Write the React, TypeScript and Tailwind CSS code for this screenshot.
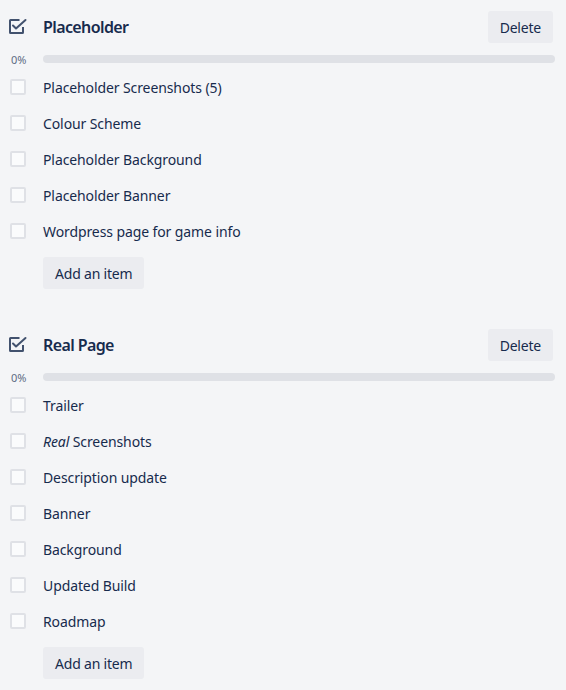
import React from "react";

type Item = { label: React.ReactNode };

interface ChecklistProps {
  title: string;
  items: Item[];
}

const ChecklistIcon = () => (
  <svg width="22" height="20" viewBox="0 0 22 20" fill="none" className="text-[#42526e]">
    <path
      d="M13.5 3H4.5C4.2 3 4 3.2 4 3.5V15.5C4 15.8 4.2 16 4.5 16H16.5C16.8 16 17 15.8 17 15.5V10"
      stroke="currentColor"
      strokeWidth="2"
    />
    <path
      d="M7 8.5L10 11.5L19.5 3"
      stroke="currentColor"
      strokeWidth="2"
      strokeLinecap="round"
      strokeLinejoin="round"
    />
  </svg>
);

const Checklist: React.FC<ChecklistProps> = ({ title, items }) => {
  return (
    <div>
      {/* Header */}
      <div className="flex items-center justify-between h-8">
        <div className="flex items-center">
          <div className="w-[43px] pl-[6px] flex items-center">
            <ChecklistIcon />
          </div>
          <h3 className="text-[16px] font-semibold tracking-[-0.6px] text-[#172b4d] leading-5">
            {title}
          </h3>
        </div>
        <button className="h-8 px-3 mr-[2px] rounded-[3px] bg-[#ebecf0] text-[14px] tracking-[-0.2px] text-[#172b4d]">
          Delete
        </button>
      </div>

      {/* Progress */}
      <div className="flex items-center h-4 mt-2">
        <span className="w-[43px] pl-[11px] text-[11px] text-[#5e6c84] leading-none">0%</span>
        <div className="flex-1 h-2 rounded bg-[#dfe1e6]" />
      </div>

      {/* Items */}
      <div className="mt-[2px]">
        {items.map((item, i) => (
          <div key={i} className="flex items-center h-9">
            <div className="w-[43px] pl-[10px]">
              <div className="w-4 h-4 rounded-[2px] border-2 border-[#dfe1e6] bg-[#fafbfc]" />
            </div>
            <span className="text-[14px] tracking-[-0.1px] text-[#172b4d]">{item.label}</span>
          </div>
        ))}
      </div>

      <button className="mt-2 ml-[43px] h-8 px-3 rounded-[3px] bg-[#ebecf0] text-[14px] tracking-[-0.2px] text-[#172b4d]">
        Add an item
      </button>
    </div>
  );
};

export default function App() {
  const placeholder: Item[] = [
    { label: "Placeholder Screenshots (5)" },
    { label: "Colour Scheme" },
    { label: "Placeholder Background" },
    { label: "Placeholder Banner" },
    { label: "Wordpress page for game info" },
  ];

  const realPage: Item[] = [
    { label: "Trailer" },
    {
      label: (
        <>
          <em>Real</em> Screenshots
        </>
      ),
    },
    { label: "Description update" },
    { label: "Banner" },
    { label: "Background" },
    { label: "Updated Build" },
    { label: "Roadmap" },
  ];

  return (
    <div
      className="min-h-screen bg-[#f4f5f7] pt-[11px] pr-[11px] pb-3"
      style={{ fontFamily: '"Noto Sans", "Open Sans", sans-serif' }}
    >
      <Checklist title="Placeholder" items={placeholder} />
      <div className="h-10" />
      <Checklist title="Real Page" items={realPage} />
    </div>
  );
}
